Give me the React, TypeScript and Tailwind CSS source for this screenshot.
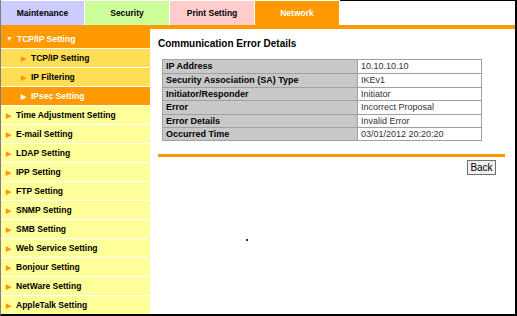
import React from "react";

const tabs = [
  { label: "Maintenance", cls: "bg-[#ccccff] text-black" },
  { label: "Security", cls: "bg-[#ccff99] text-black" },
  { label: "Print Setting", cls: "bg-[#ffcccc] text-black" },
  { label: "Network", cls: "bg-[#ff9900] text-white" },
];

const menu = [
  "Time Adjustment Setting",
  "E-mail Setting",
  "LDAP Setting",
  "IPP Setting",
  "FTP Setting",
  "SNMP Setting",
  "SMB Setting",
  "Web Service Setting",
  "Bonjour Setting",
  "NetWare Setting",
  "AppleTalk Setting",
];

const rows = [
  ["IP Address", "10.10.10.10"],
  ["Security Association (SA) Type", "IKEv1"],
  ["Initiator/Responder", "Initiator"],
  ["Error", "Incorrect Proposal"],
  ["Error Details", "Invalid Error"],
  ["Occurred Time", "03/01/2012 20:20:20"],
];

function Tri({ color = "text-[#ff9900]" }: { color?: string }) {
  return <span className={`${color} text-[7px] leading-none mr-[5px]`}>▶</span>;
}

export default function App() {
  return (
    <div
      className="relative w-[517px] h-[316px] overflow-hidden bg-white border-l border-[#808080] border-r-2 border-r-black border-b-2 border-b-black flex flex-col"
      style={{ fontFamily: '"Liberation Sans", Arial, sans-serif' }}
    >
      <div className="flex h-[25px] shrink-0">
        {tabs.map((t, i) => (
          <div
            key={t.label}
            className={`${i === 0 ? "w-[83px]" : "w-[84px]"} mt-px mr-px flex items-center justify-center font-bold text-[8.5px] ${t.cls}`}
          >
            {t.label}
          </div>
        ))}
        <div className="flex-1 border-t border-black" />
      </div>
      <div className="h-[4px] bg-[#ff9900] shrink-0" />

      <div className="flex flex-1 min-h-0">
        <div className="w-[149px] shrink-0 flex flex-col text-[8.5px] font-bold">
          <div className="h-[20px] shrink-0 border-b border-white bg-[#ff9900] text-white flex items-center pl-[5px] pt-px">
            <span className="text-[7px] mr-[4px]">▼</span>TCP/IP Setting
          </div>
          <div className="h-[19px] shrink-0 border-b border-white bg-[#ffdd55] flex items-center pl-[20px]">
            <Tri />TCP/IP Setting
          </div>
          <div className="h-[19px] shrink-0 border-b border-white bg-[#ffdd55] flex items-center pl-[20px]">
            <Tri />IP Filtering
          </div>
          <div className="h-[19px] shrink-0 border-b border-white bg-[#ff9900] text-white flex items-center pl-[20px]">
            <Tri color="text-white" />IPsec Setting
          </div>
          {menu.map((m) => (
            <div key={m} className="h-[19px] shrink-0 border-b border-white bg-[#ffff99] flex items-center pl-[5px]">
              <Tri />{m}
            </div>
          ))}
        </div>

        <div className="flex-1 pl-[8px] pr-[10px] pt-[8px]">
          <div className="font-bold text-[10px] h-[13px] leading-[13px]">Communication Error Details</div>
          <div className="ml-[4px] mt-[9px] w-[320px] border border-[#a0a0a0] text-[9px]">
            {rows.map(([k, v], i) => (
              <div key={k} className={`flex h-[13.4px] ${i > 0 ? "border-t border-[#a0a0a0]" : ""}`}>
                <div className="w-[195px] bg-[#c8c8c8] font-bold pl-[3px] leading-[13px] border-r border-[#a0a0a0]">{k}</div>
                <div className="flex-1 pl-[3px] leading-[13px] text-[#333]">{v}</div>
              </div>
            ))}
          </div>
          <div className="h-[3px] bg-[#ff9900] mt-[13px]" />
          <div className="flex justify-end pr-[9px] mt-[3px]">
            <button className="w-[29px] h-[15px] bg-[#f0f0f0] border border-[#707070] text-[10px] leading-none text-black">
              Back
            </button>
          </div>
        </div>
      </div>
      <div className="absolute left-[245px] top-[239px] w-[2px] h-[2px] bg-[#333]" />
    </div>
  );
}
